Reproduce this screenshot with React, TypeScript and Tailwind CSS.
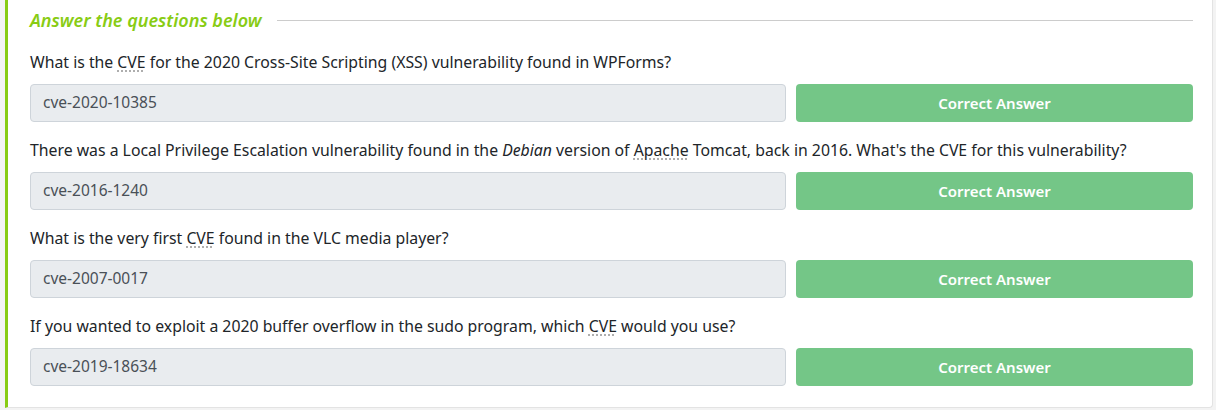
import type { ReactNode } from "react";

const Abbr = ({ children }: { children: ReactNode }) => (
  <span className="underline decoration-dotted decoration-[#999] underline-offset-[3px]">{children}</span>
);

const rows: { q: ReactNode; a: string }[] = [
  {
    q: (
      <>
        What is the <Abbr>CVE</Abbr> for the 2020 Cross-Site Scripting (XSS) vulnerability found in WPForms?
      </>
    ),
    a: "cve-2020-10385",
  },
  {
    q: (
      <>
        There was a Local Privilege Escalation vulnerability found in the <em>Debian</em> version of{" "}
        <Abbr>Apache</Abbr> Tomcat, back in 2016. What's the CVE for this vulnerability?
      </>
    ),
    a: "cve-2016-1240",
  },
  {
    q: (
      <>
        What is the very first <Abbr>CVE</Abbr> found in the VLC media player?
      </>
    ),
    a: "cve-2007-0017",
  },
  {
    q: (
      <>
        If you wanted to exploit a 2020 buffer overflow in the sudo program, which <Abbr>CVE</Abbr> would you use?
      </>
    ),
    a: "cve-2019-18634",
  },
];

export default function App() {
  return (
    <div className="w-[1216px] h-[410px] bg-[#f3f3f3] pl-[5px] pr-[3px] font-['Noto_Sans',sans-serif]">
      <div className="h-[408px] bg-white border-l-[3px] border-l-[#88cc14] border-r border-b border-[#e3e3e3] rounded-br-[4px] pl-[22px] pr-[19px]">
        <div className="flex items-center gap-4 h-[40px] pt-[1px]">
          <h3 className="italic text-[#88cc14] text-[18px] font-semibold whitespace-nowrap">
            Answer the questions below
          </h3>
          <div className="flex-1 h-px bg-[#cccccc]" />
        </div>
        {rows.map((r, i) => (
          <div key={i} className="h-[88px]">
            <p className="text-[15.8px] text-[#212529] leading-[22px] pt-[11px] pb-[11px] whitespace-nowrap">{r.q}</p>
            <div className="flex gap-[10px]">
              <div className="w-[756px] h-[38px] bg-[#e9ecef] border border-[#ced4da] rounded-[4px] px-3 flex items-center text-[15.5px] text-[#495057]">
                {r.a}
              </div>
              <button className="flex-1 h-[38px] bg-[#74c687] rounded-[4px] text-white text-[15px] font-semibold">
                Correct Answer
              </button>
            </div>
          </div>
        ))}
      </div>
    </div>
  );
}
